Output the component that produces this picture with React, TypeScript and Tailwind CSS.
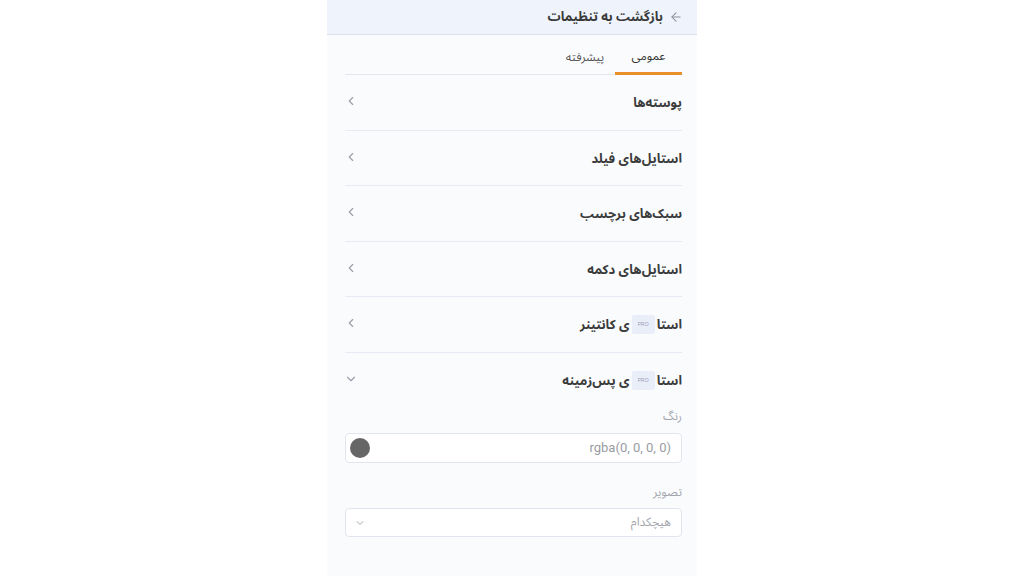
import React from "react";
import { ChevronLeft, ChevronDown, ArrowLeft } from "lucide-react";

const font = { fontFamily: '"Noto Sans Arabic", "DejaVu Sans", "Noto Sans", sans-serif' };

function Pro() {
  return (
    <span className="inline-flex items-center justify-center w-[23px] h-[19px] rounded-[2px] bg-[#e9eef8] text-[5px] font-normal text-[#9aa3b8] mx-[2px] mb-[3px] align-middle" style={{ fontFamily: '"Liberation Sans", sans-serif' }}>
      PRO
    </span>
  );
}

function Row({ children, open }: { children: React.ReactNode; open?: boolean }) {
  return (
    <div className={`flex items-center justify-between h-[55.5px] ${open ? "" : "border-b border-[#e7eaf2]"}`}>
      <div className="text-[13px] font-bold text-[#3b3b3b] flex items-center pt-[3px]">{children}</div>
      {open ? (
        <ChevronDown size={14} className="text-[#9a9fab] -ml-[1px] mb-[2px]" strokeWidth={2} />
      ) : (
        <ChevronLeft size={14} className="text-[#9a9fab] -ml-[1px] mb-[2px]" strokeWidth={2} />
      )}
    </div>
  );
}

export default function App() {
  return (
    <div className="w-full h-[576px] bg-white flex justify-center overflow-hidden">
      <div dir="rtl" className="w-[370px] h-full bg-[#fafbfd] flex flex-col" style={font}>
        <div className="h-[35px] bg-[#eef3fc] border-b border-[#d9e0f0] flex items-center pr-[14px] gap-[6px] shrink-0">
          <ArrowLeft size={14} className="text-[#8a8f9a]" strokeWidth={1.8} />
          <span className="text-[13px] font-bold text-[#3a3a3a] pt-[2px]">بازگشت به تنظیمات</span>
        </div>
        <div className="pr-[15px] pl-[18px] flex flex-col">
          <div className="flex items-end h-[40px] border-b border-[#e5e7ee]">
            <div className="w-[67px] h-full flex items-center justify-center border-b-[3px] border-[#e88f2a] mb-[-1px] pt-[6px]">
              <span className="text-[12px] text-[#333]">عمومی</span>
            </div>
            <div className="w-[60px] h-full flex items-center justify-center pt-[6px]">
              <span className="text-[12px] text-[#555]">پیشرفته</span>
            </div>
          </div>
          <Row>پوسته‌ها</Row>
          <Row>استایل‌های فیلد</Row>
          <Row>سبک‌های برچسب</Row>
          <Row>استایل‌های دکمه</Row>
          <Row>
            <span>استا</span>
            <Pro />
            <span>ی کانتینر</span>
          </Row>
          <Row open>
            <span>استا</span>
            <Pro />
            <span>ی پس‌زمینه</span>
          </Row>
          <div className="text-[12px] text-[#a3a6ad] leading-[16px] mt-[1px]">رنگ</div>
          <div className="mt-[8px] h-[30px] rounded-[4px] border border-[#e2e5ee] bg-white flex items-center justify-between pr-[10px] pl-[4px]">
            <span className="text-[13px] text-[#9a9ca3]" style={{ fontFamily: 'Roboto, "Liberation Sans", sans-serif' }} dir="ltr">rgba(0, 0, 0, 0)</span>
            <span className="w-[20px] h-[20px] rounded-full bg-[#666666]" />
          </div>
          <div className="text-[12px] text-[#a3a6ad] leading-[16px] mt-[22px]">تصویر</div>
          <div className="mt-[7px] h-[29px] rounded-[4px] border border-[#e2e5ee] bg-white flex items-center justify-between pr-[10px] pl-[8px]">
            <span className="text-[12px] text-[#a3a6ad] pt-[1px]">هیچکدام</span>
            <ChevronDown size={12} className="text-[#a3a6ad]" strokeWidth={2} />
          </div>
        </div>
      </div>
    </div>
  );
}
